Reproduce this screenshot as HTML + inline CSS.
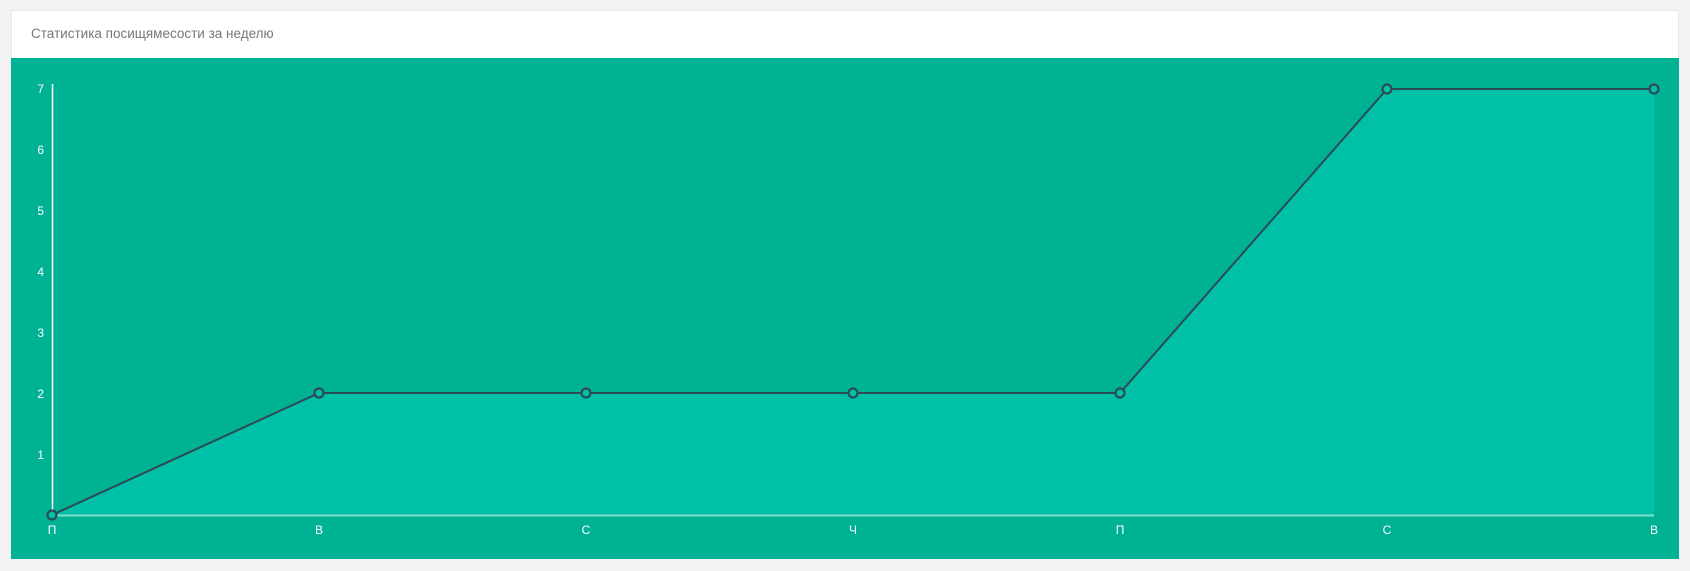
<!DOCTYPE html>
<html><head><meta charset="utf-8"><style>
body{margin:0;background:#f3f3f3;width:1690px;height:571px;overflow:hidden;font-family:"Liberation Sans",sans-serif}
.panel{position:absolute;left:11px;top:10px;width:1668px;height:549px;background:#fff;border:1px solid #e8e8e8;box-sizing:border-box}
.hd{height:48px;line-height:46px;padding-left:19px;font-size:13.5px;color:#777}
svg{position:absolute;left:0;top:58px}
</style></head><body>
<div class="panel"><div class="hd">Статистика посищямесости за неделю</div></div>
<svg width="1690" height="501" viewBox="0 58 1690 501">
<rect x="11" y="58" width="1668" height="501" fill="#00b294"/>
<polygon points="52,515 319,393 586,393 853,393 1120,393 1387,89 1654,89 1654,515" fill="#00c1a8"/>
<line x1="52" y1="515.5" x2="1654" y2="515.5" stroke="#7fe0d0" stroke-width="2"/>
<line x1="52.5" y1="84" x2="52.5" y2="515" stroke="#fff" stroke-width="1.5"/>
<polyline points="52,515 319,393 586,393 853,393 1120,393 1387,89 1654,89" fill="none" stroke="#2d4a56" stroke-width="2"/>
<g fill="#00c1a8" stroke="#2d4a56" stroke-width="2.2">
<circle cx="52" cy="515" r="4.5"/><circle cx="319" cy="393" r="4.5"/><circle cx="586" cy="393" r="4.5"/><circle cx="853" cy="393" r="4.5"/><circle cx="1120" cy="393" r="4.5"/><circle cx="1387" cy="89" r="4.5"/><circle cx="1654" cy="89" r="4.5"/>
</g>
<g fill="#fff" font-size="12" font-family="Liberation Sans,sans-serif" text-anchor="end">
<text x="44" y="93">7</text><text x="44" y="154">6</text><text x="44" y="215">5</text><text x="44" y="276">4</text><text x="44" y="337">3</text><text x="44" y="398">2</text><text x="44" y="459">1</text>
</g>
<g fill="#fff" font-size="12" font-family="Liberation Sans,sans-serif" text-anchor="middle">
<text x="52" y="534">П</text><text x="319" y="534">В</text><text x="586" y="534">С</text><text x="853" y="534">Ч</text><text x="1120" y="534">П</text><text x="1387" y="534">С</text><text x="1654" y="534">В</text>
</g>
</svg>
</body></html>
